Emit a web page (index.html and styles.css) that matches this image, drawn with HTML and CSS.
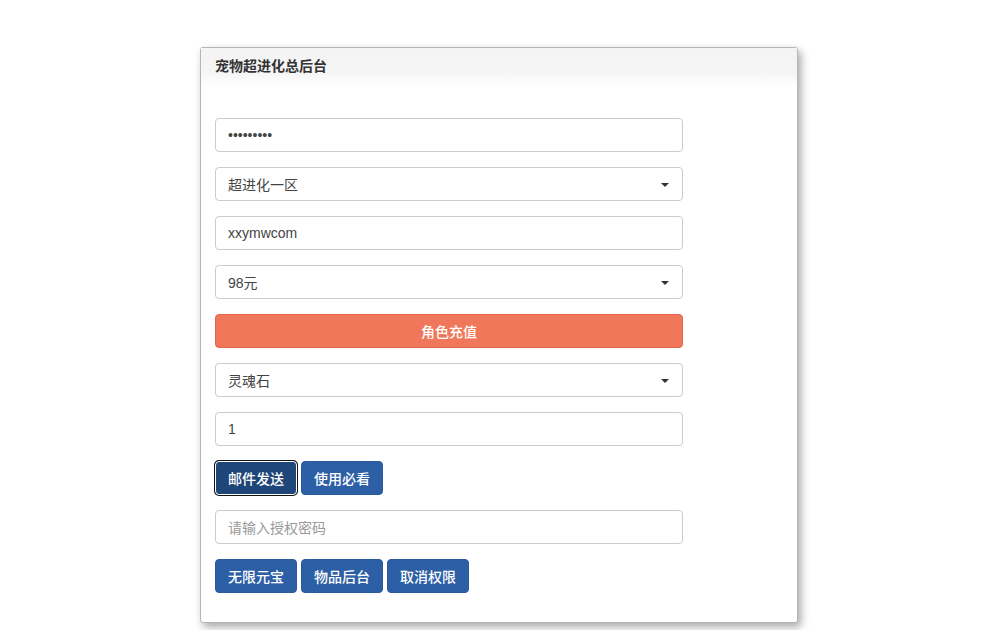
FILE: index.html
```html
<!DOCTYPE html>
<html lang="zh">
<head>
<meta charset="utf-8">
<title>宠物超进化总后台</title>
<link rel="stylesheet" href="styles.css">
</head>
<body>
<div class="card">
  <div class="card-head">宠物超进化总后台</div>
  <div class="card-body">
    <div class="field"><span class="dots">•••••••••</span></div>
    <div class="field select">超进化一区<span class="caret"></span></div>
    <div class="field">xxymwcom</div>
    <div class="field select">98元<span class="caret"></span></div>
    <button class="btn-orange">角色充值</button>
    <div class="field select">灵魂石<span class="caret"></span></div>
    <div class="field">1</div>
    <div class="btn-row">
      <button class="btn focus">邮件发送</button>
      <button class="btn">使用必看</button>
    </div>
    <div class="field placeholder">请输入授权密码</div>
    <div class="btn-row last">
      <button class="btn">无限元宝</button>
      <button class="btn">物品后台</button>
      <button class="btn">取消权限</button>
    </div>
  </div>
</div>
</body>
</html>
```
FILE: styles.css
```css
html, body {
  margin: 0;
  padding: 0;
  background: #fff;
  font-family: "Liberation Sans", "Noto Sans CJK SC", sans-serif;
}
body {
  padding: 47px 0 0 200px;
  height: 630px;
  box-sizing: border-box;
  overflow: hidden;
}
.card {
  width: 598px;
  height: 576px;
  box-sizing: border-box;
  border: 1px solid #b5b5b5;
  border-radius: 3px;
  background: #fff;
  box-shadow: 3px 4px 8px rgba(0,0,0,0.35);
}
.card-head {
  height: 38px;
  box-sizing: border-box;
  padding: 7px 14px 0;
  font-size: 14px;
  font-weight: bold;
  color: #333;
  background: linear-gradient(#f4f4f4 0%, #f5f5f5 65%, #fff 100%);
}
.card-body {
  padding: 32px 14px 0;
  display: flex;
  flex-direction: column;
  gap: 15px;
}
.field {
  width: 468px;
  height: 34px;
  box-sizing: border-box;
  border: 1px solid #ccc;
  border-radius: 4px;
  padding: 0 12px;
  display: flex;
  align-items: center;
  font-size: 14px;
  color: #444;
  position: relative;
}
.dots {
  font-size: 14px;
  letter-spacing: 0;
  color: #444;
}
.placeholder { color: #999; }
.caret {
  position: absolute;
  right: 13px;
  top: 15px;
  width: 0;
  height: 0;
  border-left: 4px solid transparent;
  border-right: 4px solid transparent;
  border-top: 4px solid #333;
}
.btn-orange {
  width: 468px;
  height: 34px;
  border: 1px solid #e2674b;
  border-radius: 4px;
  background: #f0775a;
  color: #fff;
  font-size: 14px;
  font-weight: 500;
  font-family: inherit;
  padding: 0;
}
.btn-row {
  display: flex;
  gap: 4px;
}
.btn {
  width: 82px;
  height: 34px;
  border: 1px solid #2a5a9c;
  border-radius: 4px;
  background: #2d5fa6;
  color: #fff;
  font-size: 14px;
  font-weight: 500;
  font-family: inherit;
  padding: 0;
}
.btn.focus {
  background: #1f4678;
  border: 1px solid #fff;
  box-shadow: 0 0 0 1px #111;
}
```
